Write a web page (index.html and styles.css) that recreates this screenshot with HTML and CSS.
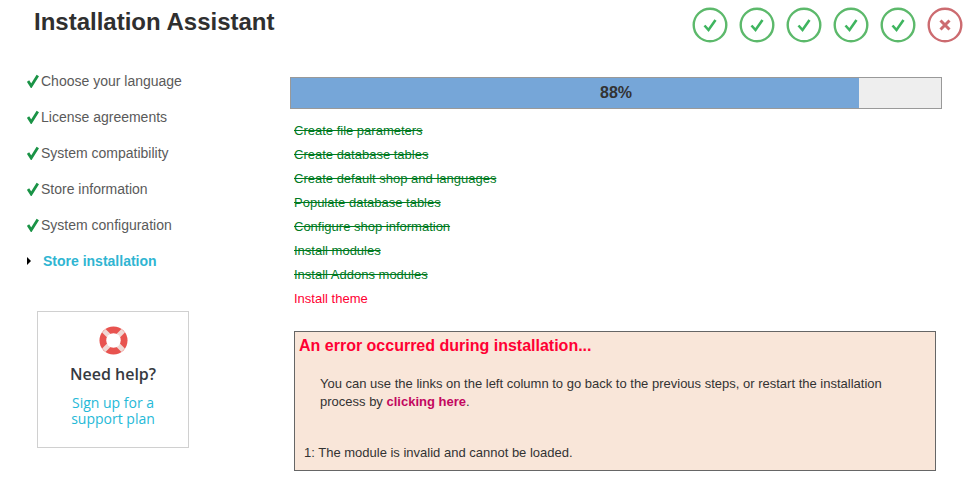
FILE: index.html
```html
<!DOCTYPE html>
<html lang="en">
<head>
    <meta charset="UTF-8">
    <title>Installation Assistant</title>
    <link rel="stylesheet" href="styles.css">
</head>
<body>
    <div class="header">
        <h1>Installation Assistant</h1>
        <div class="status-icons">
            <svg class="status" viewBox="0 0 36 36"><circle class="ok-ring" cx="18" cy="18" r="16.3"/><path class="ok-mark" d="M12.5 18.5l4 4.5 7-10"/></svg>
            <svg class="status" viewBox="0 0 36 36"><circle class="ok-ring" cx="18" cy="18" r="16.3"/><path class="ok-mark" d="M12.5 18.5l4 4.5 7-10"/></svg>
            <svg class="status" viewBox="0 0 36 36"><circle class="ok-ring" cx="18" cy="18" r="16.3"/><path class="ok-mark" d="M12.5 18.5l4 4.5 7-10"/></svg>
            <svg class="status" viewBox="0 0 36 36"><circle class="ok-ring" cx="18" cy="18" r="16.3"/><path class="ok-mark" d="M12.5 18.5l4 4.5 7-10"/></svg>
            <svg class="status" viewBox="0 0 36 36"><circle class="ok-ring" cx="18" cy="18" r="16.3"/><path class="ok-mark" d="M12.5 18.5l4 4.5 7-10"/></svg>
            <svg class="status" viewBox="0 0 36 36"><circle class="ko-ring" cx="18" cy="18" r="16.3"/><path class="ko-mark" d="M13.5 13.5l9 9M22.5 13.5l-9 9"/></svg>
        </div>
    </div>

    <div class="main">
        <div class="sidebar">
            <ul class="steps">
                <li class="step done"><svg class="tick" viewBox="0 0 14 14"><path d="M1 7l3.2 5L10.8 1.5"/></svg>Choose your language</li>
                <li class="step done"><svg class="tick" viewBox="0 0 14 14"><path d="M1 7l3.2 5L10.8 1.5"/></svg>License agreements</li>
                <li class="step done"><svg class="tick" viewBox="0 0 14 14"><path d="M1 7l3.2 5L10.8 1.5"/></svg>System compatibility</li>
                <li class="step done"><svg class="tick" viewBox="0 0 14 14"><path d="M1 7l3.2 5L10.8 1.5"/></svg>Store information</li>
                <li class="step done"><svg class="tick" viewBox="0 0 14 14"><path d="M1 7l3.2 5L10.8 1.5"/></svg>System configuration</li>
                <li class="step current"><span class="arrow"></span>Store installation</li>
            </ul>
            <div class="help">
                <svg class="buoy" viewBox="0 0 30 30">
                    <circle cx="15" cy="15" r="14.5" fill="#e8534f"/>
                    <path d="M5 5l20 20M25 5L5 25" stroke="#f0d8d4" stroke-width="5"/>
                    <circle cx="15" cy="15" r="7.5" fill="#fff"/>
                </svg>
                <div class="help-title">Need help?</div>
                <a class="help-link">Sign up for a<br>support plan</a>
            </div>
        </div>

        <div class="content">
            <div class="progress">
                <div class="progress-fill"></div>
                <span class="progress-label">88%</span>
            </div>
            <ul class="tasks">
                <li class="task-done">Create file parameters</li>
                <li class="task-done">Create database tables</li>
                <li class="task-done">Create default shop and languages</li>
                <li class="task-done">Populate database tables</li>
                <li class="task-done">Configure shop information</li>
                <li class="task-done">Install modules</li>
                <li class="task-done">Install Addons modules</li>
                <li class="task-error">Install theme</li>
            </ul>
            <div class="error-box">
                <h3>An error occurred during installation...</h3>
                <p class="error-help">You can use the links on the left column to go back to the previous steps, or restart the installation process by <a class="restart">clicking here</a>.</p>
                <p class="error-detail">1: The module is invalid and cannot be loaded.</p>
            </div>
        </div>
    </div>
</body>
</html>
```

FILE: styles.css
```css
body {
    margin: 0;
    font-family: "Liberation Sans", Arial, sans-serif;
    background-color: #fff;
    color: #333;
}
.header {
    display: flex;
    justify-content: space-between;
    padding: 7px 11px 0 34px;
    height: 63px;
    box-sizing: border-box;
}
h1 {
    margin: 0;
    font-size: 24px;
    line-height: 30px;
    color: #2f2f2f;
}
.status-icons {
    display: flex;
    gap: 11px;
}
.status {
    width: 36px;
    height: 36px;
}
.ok-ring, .ko-ring {
    fill: none;
    stroke-width: 2.4;
}
.ok-ring {
    stroke: #5cb96b;
}
.ko-ring {
    stroke: #cc6b70;
}
.ok-mark, .ko-mark {
    fill: none;
    stroke-width: 2.6;
}
.ok-mark {
    stroke: #3fb55f;
}
.ko-mark {
    stroke: #cc6b70;
    stroke-width: 3;
}
.main {
    display: flex;
}
.sidebar {
    width: 290px;
    flex-shrink: 0;
}
.steps {
    list-style: none;
    margin: 0;
    padding: 0 0 0 27px;
}
.step {
    display: flex;
    align-items: center;
    height: 36px;
    font-size: 14px;
    color: #5a5a5a;
}
.tick {
    width: 14px;
    height: 14px;
    flex-shrink: 0;
}
.tick path {
    fill: none;
    stroke: #1a9346;
    stroke-width: 2.8;
}
.current {
    color: #2fb5d2;
    font-weight: bold;
}
.arrow {
    width: 0;
    height: 0;
    border-left: 4px solid #000;
    border-top: 4px solid transparent;
    border-bottom: 4px solid transparent;
    margin-right: 12px;
}
.help {
    width: 150px;
    height: 121px;
    margin: 32px 0 0 37px;
    border: 1px solid #d0d0d0;
    text-align: center;
    font-family: "Open Sans", sans-serif;
    padding-top: 14px;
}
.buoy {
    display: block;
    width: 29px;
    height: 29px;
    margin: 0 auto;
}
.help-title {
    font-size: 16px;
    font-weight: 600;
    color: #363a41;
    margin-top: 8px;
    line-height: 22px;
}
.help-link {
    display: block;
    margin-top: 10px;
    font-size: 14px;
    line-height: 16px;
    color: #25b9d7;
}
.content {
    width: 652px;
    padding-top: 14px;
}
.progress {
    position: relative;
    height: 30px;
    border: 1px solid #999;
    background-color: #eee;
    text-align: center;
}
.progress-fill {
    position: absolute;
    left: 0;
    top: 0;
    bottom: 0;
    width: 568px;
    background-color: #76a6d8;
}
.progress-label {
    position: relative;
    font-size: 16px;
    font-weight: bold;
    line-height: 30px;
}
.tasks {
    list-style: none;
    margin: 10px 0 0 0;
    padding: 0 0 0 4px;
    font-size: 13px;
    line-height: 24px;
}
.task-done {
    color: #007a1f;
    text-decoration: line-through;
}
.task-error {
    color: #ff0033;
}
.error-box {
    margin: 20px 0 0 4px;
    width: 640px;
    height: 138px;
    border: 1px solid #666;
    background-color: #f9e6d9;
    font-size: 13px;
}
.error-box h3 {
    margin: 0;
    padding: 4px 0 0 4px;
    font-size: 16px;
    line-height: 20px;
    color: #ff0033;
}
.error-help {
    margin: 0;
    padding: 19px 40px 0 25px;
    line-height: 18px;
    color: #333;
}
.restart {
    color: #c3075f;
    font-weight: bold;
}
.error-detail {
    margin: 0;
    padding: 33px 0 0 9px;
    line-height: 18px;
}
```
